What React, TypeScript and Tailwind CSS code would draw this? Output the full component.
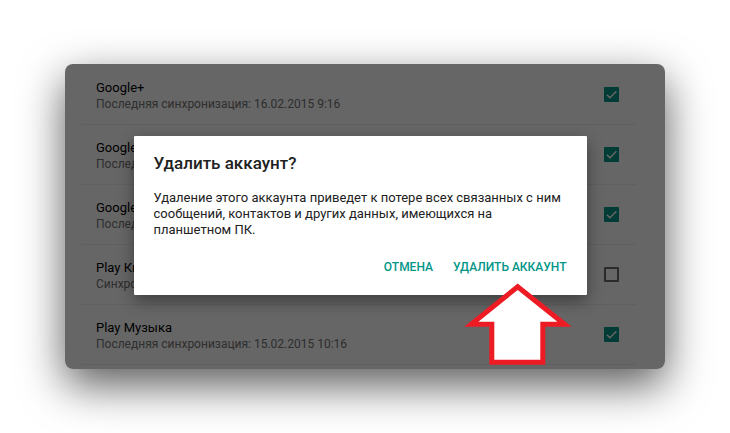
const items = [
  { id: "plus", title: "Google+", note: "Последняя синхронизация: 16.02.2015 9:16", on: true },
  { id: "photos", title: "Google", note: "Последняя", on: true },
  { id: "fit", title: "Google", note: "Последняя", on: true },
  { id: "books", title: "Play Книги", note: "Синхронизация", on: false },
  { id: "music", title: "Play Музыка", note: "Последняя синхронизация: 15.02.2015 10:16", on: true },
];

function SyncRow({ id, title, note, on }: (typeof items)[number]) {
  return (
    <li className="ml-[17px] mr-[28px] h-15 border-b border-[#f0f0f0] pl-[14px] pr-[18px]">
      <label htmlFor={id} className="flex h-full items-center justify-between">
        <span className="flex flex-col pt-0.5">
          <span className="text-[13px] leading-4 text-black">{title}</span>
          <span className="text-[12px] leading-4 text-[#737373]">{note}</span>
        </span>
        <span className="grid">
          <input
            id={id}
            type="checkbox"
            defaultChecked={on}
            className="peer col-start-1 row-start-1 size-[15px] appearance-none rounded-[1px] border-2 border-[#6b6b6b] checked:border-[#009688] checked:bg-[#009688]"
          />
          <svg
            viewBox="0 0 15 15"
            className="pointer-events-none invisible col-start-1 row-start-1 size-[15px] fill-none stroke-white peer-checked:visible"
            strokeWidth="1.5"
          >
            <path d="M2.8 7.7 6 10.8 12.4 4.3" />
          </svg>
        </span>
      </label>
    </li>
  );
}

function Dialog() {
  return (
    <div
      role="dialog"
      aria-labelledby="dialog-title"
      className="w-full max-w-[453px] rounded-[1px] bg-white px-5 pt-[17px] pb-[18px] shadow-[0_6px_16px_rgba(0,0,0,0.4)]"
    >
      <h2 id="dialog-title" className="text-[17px] leading-5 font-medium text-[#212121]">
        Удалить аккаунт?
      </h2>
      <p className="mt-[17px] text-[13px] leading-4 text-[#212121]">
        Удаление этого аккаунта приведет к потере всех связанных с ним сообщений, контактов и других
        данных, имеющихся на планшетном ПК.
      </p>
      <div className="mt-[19px] flex justify-end gap-5 text-[12px] leading-5 font-medium text-[#009688]">
        <button type="button">ОТМЕНА</button>
        <button type="button">УДАЛИТЬ АККАУНТ</button>
      </div>
    </div>
  );
}

function Arrow() {
  return (
    <svg
      viewBox="0 0 110 84"
      className="pointer-events-none absolute top-[218px] right-[92px] h-[84px] w-[110px]"
      aria-hidden="true"
    >
      <path
        d="M54.7 4.7 8.2 42.3H28.8V80.3H79.8V42.3H101.6Z"
        fill="#fff"
        stroke="#ed1c24"
        strokeWidth="5"
      />
    </svg>
  );
}

export default function App() {
  return (
    <main className="min-h-screen bg-white px-8 py-16 font-[Roboto,sans-serif]">
      <div className="relative mx-auto max-w-[600px] rounded-lg bg-white shadow-[0_16px_44px_rgba(0,0,0,0.65)]">
        <ul className="pt-px pb-1">
          {items.map((item) => (
            <SyncRow key={item.id} {...item} />
          ))}
        </ul>
        <div className="absolute inset-0 flex items-center justify-center rounded-lg bg-black/60 pr-2.5 pb-0.5">
          <Dialog />
        </div>
        <Arrow />
      </div>
    </main>
  );
}
